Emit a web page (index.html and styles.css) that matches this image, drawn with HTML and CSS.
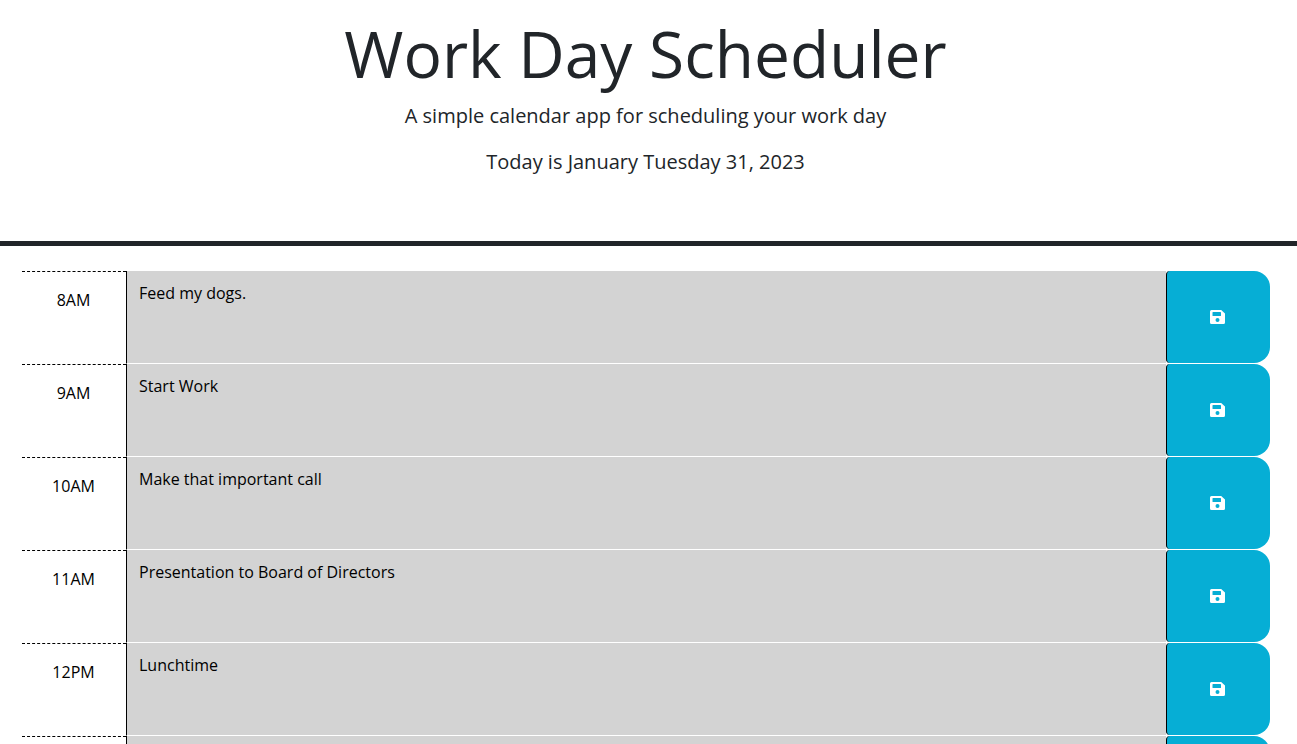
FILE: index.html
```html
<!DOCTYPE html>
<html lang="en">
<head>
<meta charset="utf-8">
<title>Work Day Scheduler</title>
<link rel="stylesheet" href="styles.css">
</head>
<body>
<svg class="sprite" aria-hidden="true"><symbol id="save" viewBox="0 0 15 14"><path fill="currentColor" fill-rule="evenodd" d="M1.5 0H11.2L15 3.4V12.5Q15 14 13.5 14H1.5Q0 14 0 12.5V1.5Q0 0 1.5 0ZM3 2Q2.5 2 2.5 2.5V5.5Q2.5 6 3 6H10.5Q11 6 11 5.5V2.5L10.5 2ZM7.5 8A2 2 0 1 0 7.5 12A2 2 0 1 0 7.5 8Z"/></symbol></svg>
<header class="header">
<h1 class="title">Work Day Scheduler</h1>
<p class="lead">A simple calendar app for scheduling your work day</p>
<p class="lead">Today is January Tuesday 31, 2023</p>
</header>
<main class="schedule">
<div class="time-block"><label class="hour" for="h8">8AM</label><textarea class="description" id="h8">Feed my dogs.</textarea><button class="save-btn" aria-label="save"><svg class="icon"><use href="#save"/></svg></button></div>
<div class="time-block"><label class="hour" for="h9">9AM</label><textarea class="description" id="h9">Start Work</textarea><button class="save-btn" aria-label="save"><svg class="icon"><use href="#save"/></svg></button></div>
<div class="time-block"><label class="hour" for="h10">10AM</label><textarea class="description" id="h10">Make that important call</textarea><button class="save-btn" aria-label="save"><svg class="icon"><use href="#save"/></svg></button></div>
<div class="time-block"><label class="hour" for="h11">11AM</label><textarea class="description" id="h11">Presentation to Board of Directors</textarea><button class="save-btn" aria-label="save"><svg class="icon"><use href="#save"/></svg></button></div>
<div class="time-block"><label class="hour" for="h12">12PM</label><textarea class="description" id="h12">Lunchtime</textarea><button class="save-btn" aria-label="save"><svg class="icon"><use href="#save"/></svg></button></div>
<div class="time-block"><label class="hour" for="h13">1PM</label><textarea class="description" id="h13"></textarea><button class="save-btn" aria-label="save"><svg class="icon"><use href="#save"/></svg></button></div>
</main>
</body>
</html>
```
FILE: styles.css
```css
* {
  box-sizing: border-box;
}

html {
  scrollbar-width: none;
}

body {
  margin: 0;
  font-family: "Open Sans", sans-serif;
  font-size: 16px;
  font-weight: 400;
  line-height: 24px;
  color: #212529;
  background: #fff;
}

.sprite {
  position: absolute;
  width: 0;
  height: 0;
}

.header {
  padding: 16px 24px 64px 18px;
  border-bottom: 5px solid #212529;
  text-align: center;
}

.title {
  margin: 0 0 9px;
  font-size: 64px;
  font-weight: 400;
  line-height: 76px;
}

.lead {
  margin: 0 0 16px;
  font-size: 20px;
  line-height: 30px;
}

.lead:last-child {
  margin: 0;
}

.schedule {
  padding: 25px 27px 0 22px;
}

.time-block {
  display: grid;
  grid-template-columns: 1fr 10fr 1fr;
  height: 93px;
}

.hour {
  padding: 16px 1px 16px 0;
  border-top: 1px dashed #000;
  color: #000;
  text-align: center;
}

.description {
  min-width: 0;
  margin: 0;
  padding: 10px 12px;
  border: 0;
  border-left: 1px solid #000;
  border-bottom: 1px solid #fff;
  outline: 0;
  resize: none;
  font: inherit;
  color: #000;
  background: #d3d3d3;
}

.save-btn {
  display: grid;
  place-items: center;
  margin-bottom: 1px;
  padding: 0 2px 0 0;
  border: 0;
  border-left: 1px solid #000;
  border-radius: 4px 16px 16px 4px;
  color: #fff;
  background: #06aed5;
  cursor: pointer;
}

.icon {
  width: 15px;
  height: 14px;
}
```
